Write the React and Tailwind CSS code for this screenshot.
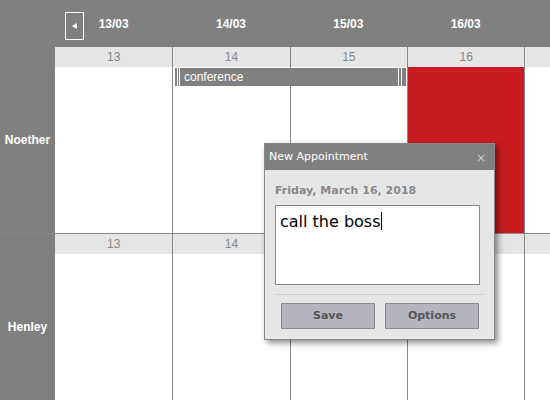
import React from "react";

const days = ["13", "14", "15", "16", "17"];

function ResourceRow({ name, first }) {
  return (
    <div className={`flex shrink-0 ${first ? "h-[186px]" : "h-[187px] border-t border-[#888]"}`}>
      <div className="w-[55px] shrink-0 flex items-center justify-center text-[12px] font-bold text-white">
        {name}
      </div>
      <div className="relative flex bg-white flex-1">
        {days.map((d, i) => (
          <div
            key={d}
            className={`w-[117.33px] shrink-0 flex flex-col ${i > 0 ? "border-l border-[#888]" : ""}`}
          >
            <div className="h-[20px] bg-[#e5e5e5] flex items-center justify-center text-[12px] text-[#888]">
              {i < 4 ? d : ""}
            </div>
            <div className={`flex-1 ${first && i === 3 ? "bg-[#c81b22]" : ""}`}></div>
          </div>
        ))}
        {first && (
          <div className="absolute left-[120px] top-[21px] w-[232px] h-[18px] flex bg-[#808080]">
            <div className="w-[2px] bg-[#808080]"></div>
            <div className="w-[1px] bg-white"></div>
            <div className="w-[1px] bg-[#808080]"></div>
            <div className="w-[1px] bg-white"></div>
            <div className="flex-1 pl-[4px] text-[12px] leading-[18px] text-white">conference</div>
            <div className="w-[1px] bg-white"></div>
            <div className="w-[2px] bg-[#808080]"></div>
            <div className="w-[1px] bg-white"></div>
            <div className="w-[4px] bg-[#808080]"></div>
            <div className="w-[1px] bg-white"></div>
          </div>
        )}
      </div>
    </div>
  );
}

export default function App() {
  return (
    <div className="relative w-[550px] h-[400px] overflow-hidden bg-[#808080] flex flex-col font-['Liberation_Sans',Arial,sans-serif]">
      <div className="h-[47px] shrink-0 flex">
        <div className="w-[55px] shrink-0"></div>
        {days.map((d, i) => (
          <div
            key={d}
            className="relative w-[117.33px] shrink-0 flex items-center justify-center text-[12px] font-bold text-white"
          >
            {i === 0 && (
              <button className="absolute left-[10px] top-[12px] w-[19px] h-[28px] border border-white flex items-center justify-center">
                <svg width="8" height="8" viewBox="0 0 8 8">
                  <polygon points="1,4 6,1 6,7" fill="white" />
                </svg>
              </button>
            )}
            {i < 4 ? `${d}/03` : ""}
          </div>
        ))}
      </div>

      <ResourceRow name="Noether" first />
      <ResourceRow name="Henley" />

      <div className="absolute left-[264px] top-[143px] w-[231px] h-[197px] border border-[#888] bg-[#e6e6e6] shadow-[3px_3px_6px_rgba(0,0,0,0.45)] flex flex-col font-['DejaVu_Sans',Verdana,sans-serif]">
        <div className="h-[26px] bg-[#808080] flex items-center justify-between pl-[4px] pr-[8px] pt-[1px]">
          <span className="text-[11px] text-white">New Appointment</span>
          <span className="text-[12px] text-[#ccc]">×</span>
        </div>
        <div className="px-[10px] pt-[14px]">
          <div className="text-[11px] font-bold text-[#888] leading-[14px]">Friday, March 16, 2018</div>
          <div className="mt-[7px] w-[205px] h-[80px] border border-[#888] bg-white px-[4px] pt-[6px] text-[16px] leading-[20px] text-black">
            call the boss<span className="inline-block w-[1px] h-[18px] bg-black align-[-3px]"></span>
          </div>
          <div className="mt-[9px] w-[209px] border-t border-[#d0d0d0]"></div>
          <div className="mt-[8px] flex gap-[10px] pl-[6px]">
            <button className="w-[94px] h-[26px] bg-[#b5b5bf] border border-[#888] text-[11px] font-bold text-[#555]">
              Save
            </button>
            <button className="w-[94px] h-[26px] bg-[#b5b5bf] border border-[#888] text-[11px] font-bold text-[#555]">
              Options
            </button>
          </div>
        </div>
      </div>
    </div>
  );
}
